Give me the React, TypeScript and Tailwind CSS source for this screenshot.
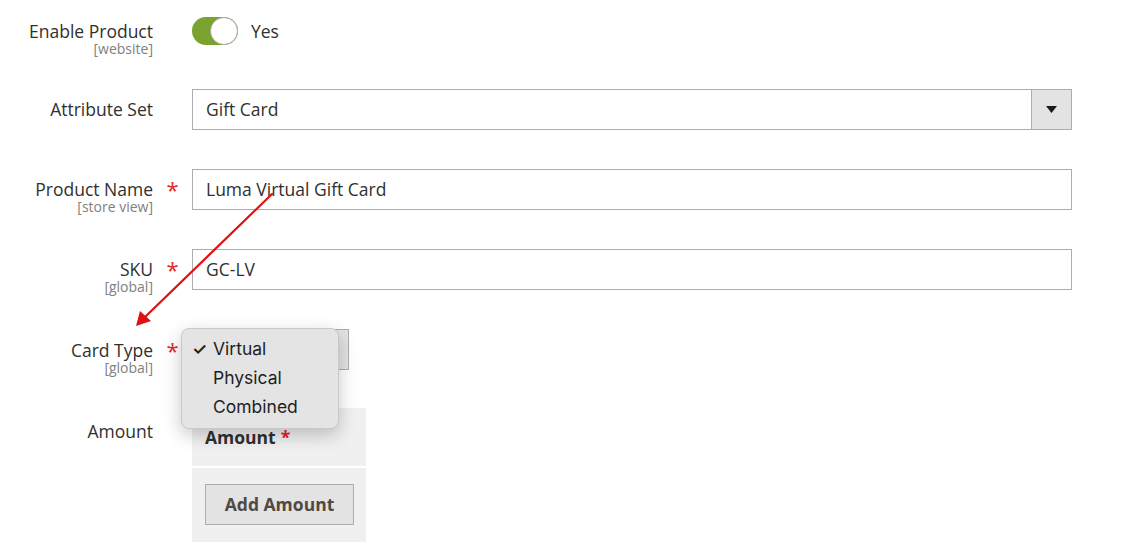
import React from 'react';

const font = { fontFamily: '"Open Sans", "Liberation Sans", sans-serif' };

function Label({ text, scope, required, pt = 'pt-[9px]' }: { text: string; scope?: string; required?: boolean; pt?: string }) {
  return (
    <>
      <div className={`w-[153px] shrink-0 text-right ${pt}`}>
        <div className="text-[17.5px] leading-[22px] text-[#303030]">{text}</div>
        {scope && <div className="text-[14px] leading-[14px] text-[#808080]">{scope}</div>}
      </div>
      <div className={`w-[39px] shrink-0 text-center ${pt}`}>
        {required && <span className="text-[22px] leading-[22px] text-[#e22626]">*</span>}
      </div>
    </>
  );
}

function TextInput({ value }: { value: string }) {
  return (
    <div className="flex h-[41px] w-[880px] items-center border border-[#adadad] bg-white px-[13px] text-[17.5px] text-[#303030]">
      {value}
    </div>
  );
}

export default function App() {
  return (
    <div className="relative h-[557px] w-[1140px] overflow-hidden bg-white" style={font}>
      <div className="flex flex-col">
        {/* Enable Product */}
        <div className="mt-[11px] flex h-[41px]">
          <Label text="Enable Product" scope="[website]" />
          <div className="flex items-center gap-[13px] pt-[6px] self-start">
            <div className="relative h-[28px] w-[46px] rounded-full bg-[#79a22e]">
              <div className="absolute right-0 top-0 h-[28px] w-[28px] rounded-full border border-[#adadad] bg-white" />
            </div>
            <span className="text-[17.5px] text-[#303030]">Yes</span>
          </div>
        </div>

        {/* Attribute Set */}
        <div className="mt-[37px] flex h-[41px]">
          <Label text="Attribute Set" />
          <div className="flex h-[41px] w-[880px] border border-[#adadad] bg-white">
            <div className="flex flex-1 items-center px-[13px] text-[17.5px] text-[#303030]">Gift Card</div>
            <div className="flex w-[40px] items-center justify-center border-l border-[#adadad] bg-[#e3e3e3]">
              <svg width="11" height="7" viewBox="0 0 11 7"><path d="M0 0h11L5.5 7z" fill="#1a1a1a" /></svg>
            </div>
          </div>
        </div>

        {/* Product Name */}
        <div className="mt-[39px] flex h-[41px]">
          <Label text="Product Name" scope="[store view]" required />
          <TextInput value="Luma Virtual Gift Card" />
        </div>

        {/* SKU */}
        <div className="mt-[39px] flex h-[41px]">
          <Label text="SKU" scope="[global]" required />
          <TextInput value="GC-LV" />
        </div>

        {/* Card Type */}
        <div className="mt-[39px] flex h-[41px]">
          <Label text="Card Type" scope="[global]" required pt="pt-[10px]" />
          <div className="relative">
            <div className="flex h-[41px] w-[157px] border border-[#adadad] bg-white">
              <div className="flex-1" />
              <div className="w-[40px] border-l border-[#adadad] bg-[#e3e3e3]" />
            </div>
            <div
              className="absolute -left-[11px] -top-[1px] z-10 w-[158px] rounded-[8px] border border-[#c8c8c8] bg-[#e4e4e4] py-[6px] text-[17.5px] text-[#1e1e1e] shadow-[0_6px_18px_rgba(0,0,0,0.22)]"
              style={{ fontFamily: 'Inter, "Liberation Sans", sans-serif' }}
            >
              <div className="flex h-[29px] items-center">
                <span className="w-[31px] pl-[10px] text-[17px] font-semibold">✓</span>
                <span>Virtual</span>
              </div>
              <div className="flex h-[29px] items-center">
                <span className="w-[31px]" />
                <span>Physical</span>
              </div>
              <div className="flex h-[29px] items-center">
                <span className="w-[31px]" />
                <span>Combined</span>
              </div>
            </div>
          </div>
        </div>

        {/* Amount */}
        <div className="mt-[38px] flex">
          <Label text="Amount" pt="pt-[12px]" />
          <div className="w-[174px] bg-[#f0f0f0]">
            <div className="flex h-[58px] items-center px-[13px] text-[17.5px] font-bold text-[#303030]">
              Amount <span className="ml-[5px] text-[#e22626]">*</span>
            </div>
            <div className="h-[2px] bg-white" />
            <div className="px-[13px] pt-[16px] pb-[17px]">
              <div className="flex h-[41px] w-[149px] items-center justify-center border border-[#adadad] bg-[#e3e3e3] text-[17.5px] font-bold text-[#514943]">
                Add Amount
              </div>
            </div>
          </div>
        </div>
      </div>

      {/* annotation arrow */}
      <svg className="pointer-events-none absolute left-0 top-0" width="1140" height="557">
        <line x1="272" y1="194" x2="144" y2="318" stroke="#e01010" strokeWidth="2.2" strokeLinecap="round" />
        <path d="M136 326 L140 311 L151 321 Z" fill="#e01010" />
      </svg>
    </div>
  );
}
